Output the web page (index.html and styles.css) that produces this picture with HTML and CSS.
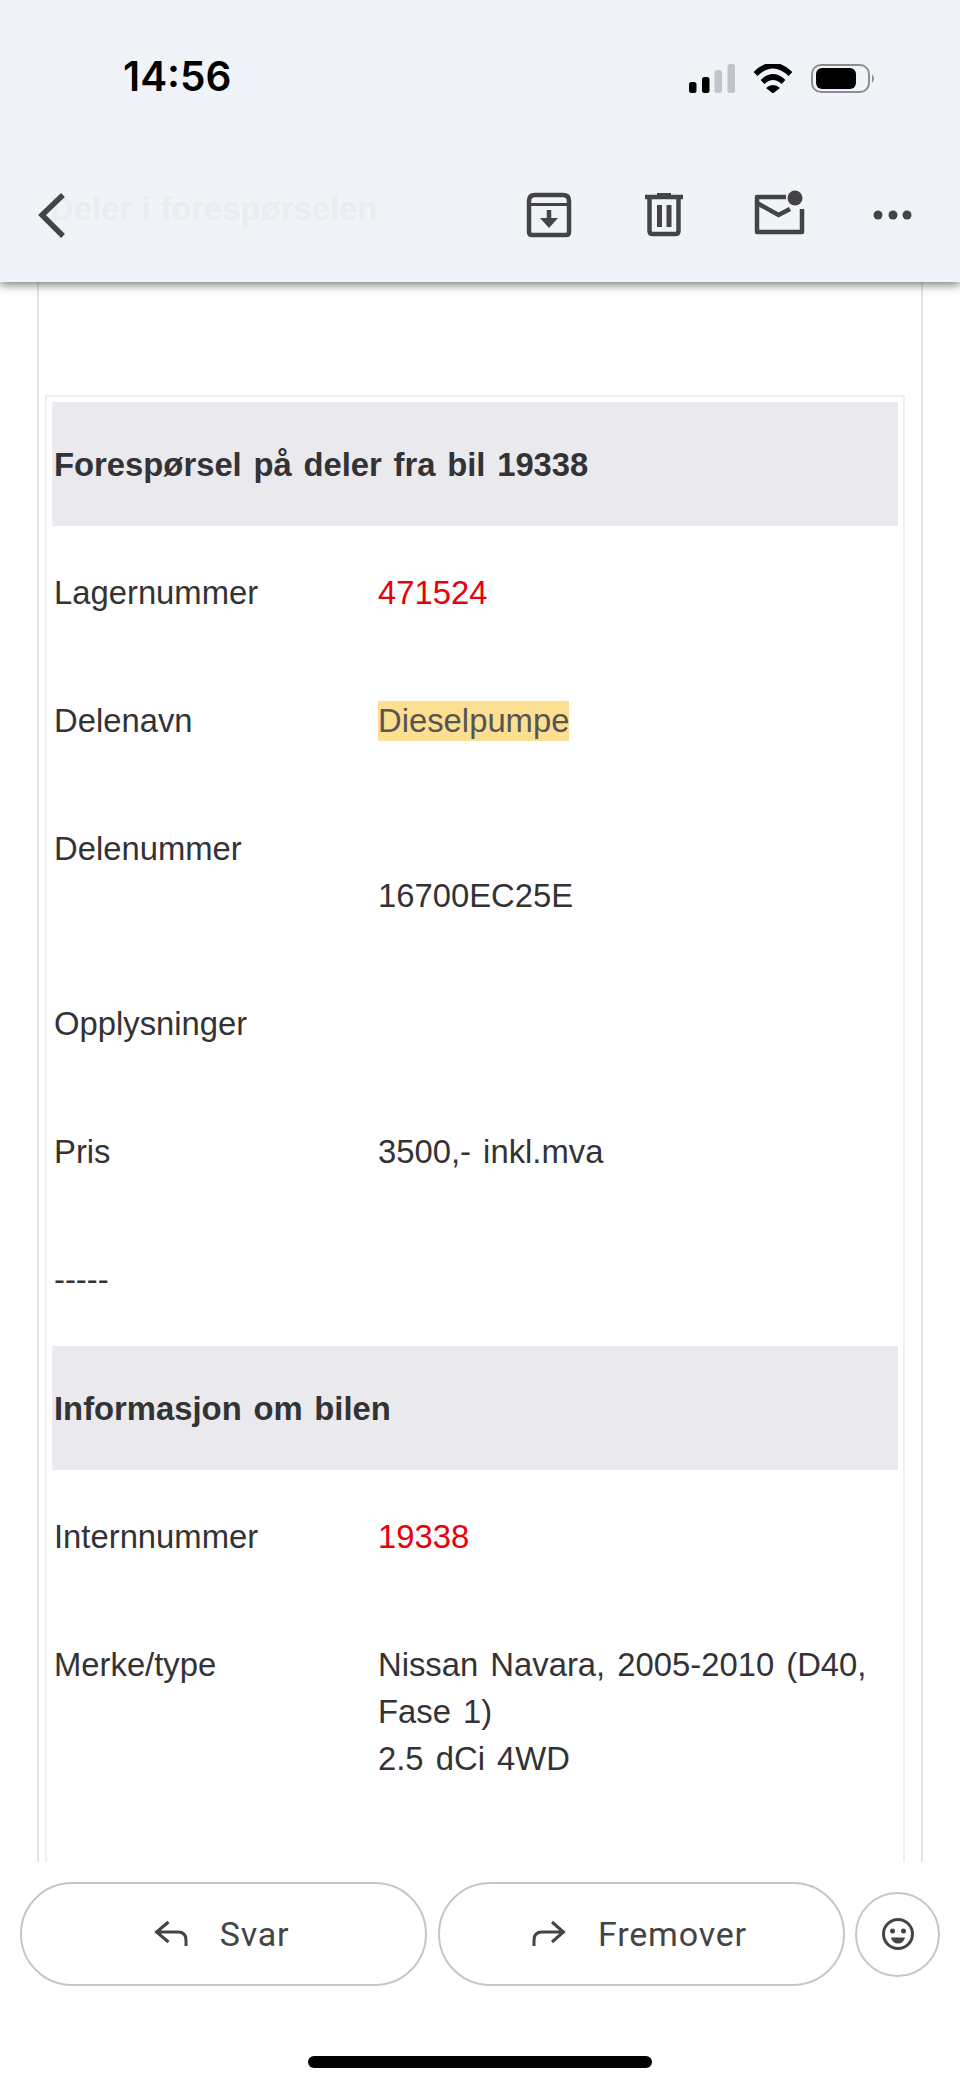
FILE: index.html
```html
<!DOCTYPE html>
<html lang="no">
<head>
<meta charset="utf-8">
<title>Deler i forespørselen</title>
<link rel="stylesheet" href="styles.css">
</head>
<body>
<header class="top">
  <div class="status">
    <span class="time">14:56</span>
    <div class="status-icons">
      <svg class="ic-signal" viewBox="689 63 46 29"><rect x="689" y="81" width="7.5" height="11" rx="2.5" fill="#000"/><rect x="702" y="76" width="7.5" height="16" rx="2.5" fill="#000"/><rect x="714.5" y="69" width="7.5" height="23" rx="2.5" fill="#c1c4c9"/><rect x="727.5" y="63" width="7.5" height="29" rx="2.5" fill="#c1c4c9"/></svg>
      <svg class="ic-wifi" viewBox="753 63 40 29"><path d="M755.5 73Q773 56 790.5 73" fill="none" stroke="#000" stroke-width="5.5"/><path d="M762.5 81Q773 71 783.5 81" fill="none" stroke="#000" stroke-width="5.5"/><path d="M766 87Q773 81 780 87L773 92.5Z" fill="#000"/></svg>
      <svg class="ic-batt" viewBox="811 63 66 29"><rect x="812" y="64" width="57" height="27" rx="9" fill="none" stroke="#8b8d91" stroke-width="2"/><rect x="816" y="67" width="40" height="21" rx="6" fill="#000"/><path d="M872 73Q876 77.500 872 82Z" fill="#8b8d91"/></svg>
    </div>
  </div>
  <div class="toolbar">
    <svg class="ic-back" viewBox="30 186 40 56"><path d="M63 195L42 215L63 236" fill="none" stroke="#444" stroke-width="5.500"/></svg>
    <span class="title">Deler i forespørselen</span>
    <svg class="ic-archive" viewBox="524 186 52 56"><path d="M535 195H563Q569 195 569 201V232Q569 235 566 235H532Q529 235 529 232V201Q529 195 535 195Z" fill="none" stroke="#444" stroke-width="4.500"/><path d="M530 204.500H568" stroke="#444" stroke-width="3"/><path d="M549 210V222" stroke="#444" stroke-width="4.500"/><path d="M540 218H558L549 228Z" fill="#444"/></svg>
    <svg class="ic-trash" viewBox="640 186 48 56"><path d="M645 197H683" stroke="#444" stroke-width="4.500"/><rect x="657" y="193" width="14" height="4" fill="#444"/><path d="M649.500 197V231Q649.500 234 652.500 234H675.500Q678.500 234 678.500 231V197" fill="none" stroke="#444" stroke-width="4.500"/><rect x="657" y="205" width="5" height="22" fill="#444"/><rect x="666.500" y="205" width="5" height="22" fill="#444"/></svg>
    <svg class="ic-mail" viewBox="750 186 58 56"><path d="M786 197H757V232H802V209" fill="none" stroke="#444" stroke-width="4.500" stroke-linejoin="round"/><path d="M757 203L778.500 215L790 209" fill="none" stroke="#444" stroke-width="4.500"/><circle cx="795" cy="198" r="7.500" fill="#444"/></svg>
    <svg class="ic-more" viewBox="870 186 45 56"><circle cx="878" cy="215" r="4.500" fill="#444"/><circle cx="893" cy="215" r="4.500" fill="#444"/><circle cx="907" cy="215" r="4.500" fill="#444"/></svg>
  </div>
</header>

<main class="mail">
  <div class="frame">
    <table class="parts">
      <colgroup><col class="col-label"><col></colgroup>
      <tr><td class="head" colspan="2">Forespørsel på deler fra bil 19338</td></tr>
      <tr><td>Lagernummer</td><td class="red">471524</td></tr>
      <tr><td>Delenavn</td><td><mark class="hit">Dieselpumpe</mark></td></tr>
      <tr><td>Delenummer</td><td><br>16700EC25E</td></tr>
      <tr><td>Opplysninger</td><td></td></tr>
      <tr><td>Pris</td><td>3500,- inkl.mva</td></tr>
      <tr><td>-----</td><td></td></tr>
      <tr><td class="head" colspan="2">Informasjon om bilen</td></tr>
      <tr><td>Internnummer</td><td class="red">19338</td></tr>
      <tr><td>Merke/type</td><td>Nissan Navara, 2005-2010 (D40,<br>Fase 1)<br>2.5 dCi 4WD</td></tr>
      <tr><td>&nbsp;</td><td>&nbsp;</td></tr>
    </table>
  </div>
</main>

<footer class="bottom">
  <div class="actions">
    <button class="pill">
      <svg class="ic-reply" viewBox="150 1918 38 32"><path d="M166.500 1922L154.500 1932L166.500 1942M154.500 1932H176Q184 1932 184 1940V1946" fill="none" stroke="#444" stroke-width="3"/></svg>
      <span>Svar</span>
    </button>
    <button class="pill">
      <svg class="ic-forward" viewBox="528 1918 38 32"><path d="M550 1922L561.500 1932L550 1942M561.500 1932H540Q532 1932 532 1940V1946" fill="none" stroke="#444" stroke-width="3"/></svg>
      <span>Fremover</span>
    </button>
    <button class="round">
      <svg class="ic-smile" viewBox="880 1916 36 36"><circle cx="898" cy="1934" r="14.500" fill="none" stroke="#444" stroke-width="3"/><circle cx="892.500" cy="1931" r="2.500" fill="#444"/><circle cx="903.500" cy="1931" r="2.500" fill="#444"/><path d="M891 1937.500H905Q903.500 1943.500 898 1943.500Q892.500 1943.500 891 1937.500Z" fill="#444"/></svg>
    </button>
  </div>
  <div class="home"></div>
</footer>
</body>
</html>
```
FILE: styles.css
```css
* { box-sizing: border-box; }
html, body { margin: 0; padding: 0; }
body {
  width: 960px;
  height: 2087px;
  display: flex;
  flex-direction: column;
  overflow: hidden;
  background: #fff;
  font-family: "Liberation Sans", Arial, sans-serif;
}
svg { display: block; flex: none; }

/* Top bar */
.top {
  position: relative;
  z-index: 2;
  flex: none;
  height: 282px;
  padding-top: 40px;
  background: #f0f3f8;
  box-shadow: 0 3px 9px rgba(0, 0, 0, .5);
}
.status {
  display: flex;
  justify-content: space-between;
  align-items: center;
  height: 76px;
  padding: 0 83px 0 123px;
}
.time {
  font-family: Inter, "Liberation Sans", sans-serif;
  font-weight: 600;
  font-size: 40.500px;
  line-height: 74px;
  height: 76px;
  color: #000;
}
.status-icons { display: flex; gap: 18px; align-items: center; }
.ic-signal { width: 46px; height: 29px; }
.ic-wifi { width: 40px; height: 29px; }
.ic-batt { width: 66px; height: 29px; }

.toolbar {
  display: flex;
  align-items: center;
  margin-top: 70px;
  height: 56px;
  padding: 0 45px 0 30px;
}
.ic-back { width: 40px; height: 56px; position: relative; z-index: 1; }
.title {
  flex: 1;
  margin-left: -20px;
  font-weight: 700;
  font-size: 32.800px;
  word-spacing: .5px;
  color: #e9ecf1;
  padding-bottom: 10px;
}
.ic-archive { width: 52px; height: 56px; }
.ic-trash { width: 48px; height: 56px; margin-left: 64px; }
.ic-mail { width: 58px; height: 56px; margin-left: 62px; }
.ic-more { width: 45px; height: 56px; margin-left: 62px; }

/* Message */
.mail { flex: 1; min-height: 0; overflow: hidden; }
.frame {
  margin: 0 37px;
  padding: 113px 16px 0 6px;
  border-left: 2px solid #e4e6ee;
  border-right: 2px solid #e4e6ee;
  height: 100%;
}
.parts {
  width: 860px;
  table-layout: fixed;
  border-collapse: separate;
  border-spacing: 5px;
  border: 2px solid #eeeff5;
  font-size: 32.800px;
  line-height: 47px;
  word-spacing: 3px;
  color: #333336;
}
.col-label { width: 319px; }
.parts td {
  padding: 38px 2px;
  vertical-align: top;
}
.parts .head {
  padding-top: 39px;
  background: #e9e9ee;
  font-weight: 700;
  word-spacing: 2.600px;
}
.parts .red { color: #e8000b; }
.hit {
  display: inline-block;
  height: 40px;
  line-height: 40px;
  vertical-align: top;
  margin-top: 4px;
  background: #fddf92;
  color: #555;
}

/* Bottom bar */
.bottom {
  flex: none;
  height: 225px;
  background: #fff;
  padding: 20px 20px 0;
}
.actions { display: flex; align-items: center; }
.pill {
  width: 407px;
  height: 104px;
  margin-right: 11px;
  border: 2.500px solid #c6c6c6;
  border-radius: 52px;
  background: #fff;
  display: flex;
  align-items: center;
  justify-content: center;
  gap: 30px;
  padding: 0 6px 0 0;
  font-family: Roboto, "Liberation Sans", sans-serif;
  font-size: 34px;
  letter-spacing: .8px;
  color: #444;
}
.pill + .pill { margin-right: 10px; }
.round {
  width: 85px;
  height: 85px;
  border: 2.500px solid #c6c6c6;
  border-radius: 50%;
  background: #fff;
  padding: 0;
  display: flex;
  align-items: center;
  justify-content: center;
}
.ic-reply, .ic-forward { width: 38px; height: 32px; }
.ic-smile { width: 36px; height: 36px; }
.home {
  width: 344px;
  height: 12px;
  margin: 70px auto 0;
  border-radius: 6px;
  background: #000;
}
```
